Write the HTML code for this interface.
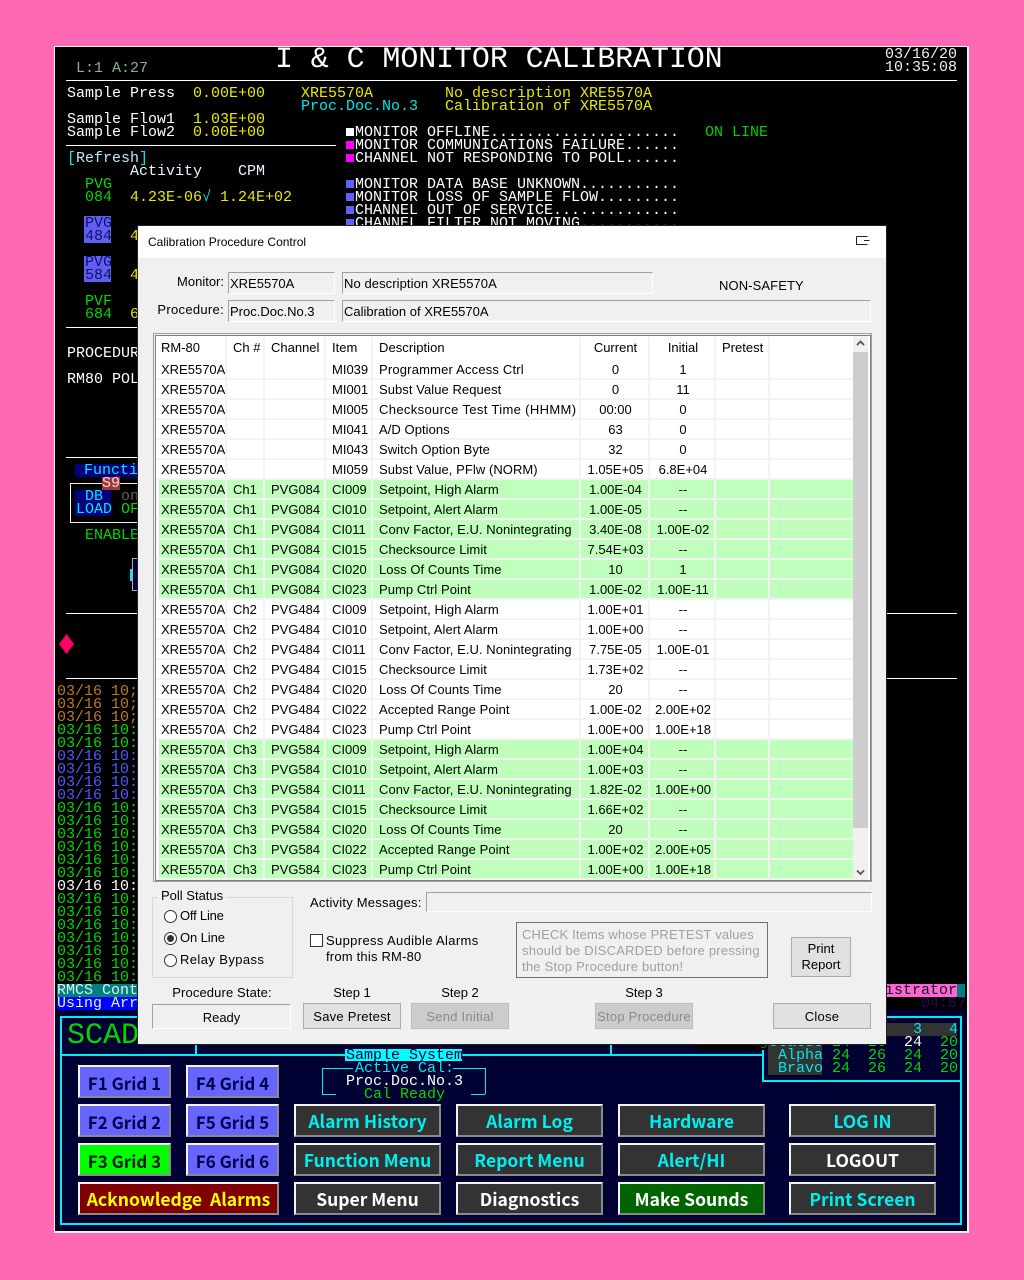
<!DOCTYPE html>
<html><head><meta charset="utf-8"><title>I &amp; C Monitor Calibration</title>
<style>
html,body{margin:0;padding:0;width:1024px;height:1280px;overflow:hidden;background:#ff69b4}
div,span.a{position:absolute}
#win{left:54px;top:46px;width:912px;height:1184px;background:#000;border:1px solid #f0f0f0;border-width:1px 2px 2px 1px;overflow:hidden}
#root{left:0;top:0;width:1024px;height:1280px}
.t{position:absolute;margin-top:1px;font:15px/13px "Liberation Mono",monospace;white-space:pre;color:#fff;height:13px}
.y{color:#e8e800}.g{color:#00d800}.c{color:#00e8e8}.w{color:#e8f0f0}
.l{position:absolute;background:#fff}
.k{position:absolute;background:#00eeee}
.sq{position:absolute;width:8px;height:8px;left:346px}
.b{position:absolute;box-sizing:border-box;height:33px;border:2px solid;border-color:#f4f4f4 #8a8a8a #8a8a8a #f4f4f4;background:#333;font:700 17.500px/32px "Noto Sans CJK SC","Liberation Sans",sans-serif;text-align:center;white-space:pre;color:#00eeee}
.f{background:#6666ff;color:#000050;width:93px;font-size:17px}
.m{width:147px}
#dlg{left:138px;top:226px;width:748px;height:818px;background:#f0f0f0;font:13px/18px "Liberation Sans",sans-serif;color:#000;overflow:hidden;box-shadow:0 0 0 1px #222}
#dlg div{white-space:pre}
.fld{box-sizing:border-box;height:22px;border:1px solid;border-color:#a0a0a0 #fff #fff #a0a0a0;line-height:22px}
.btn{box-sizing:border-box;height:26px;width:98px;top:777px;background:#e1e1e1;border:1px solid #adadad;text-align:center;line-height:26px;letter-spacing:.25px}
.dis{background:#ccc;color:#8a8a8a;border-color:#bfbfbf}
.lb{text-align:center}
table{position:absolute;left:18px;top:111px;border-collapse:separate;border-spacing:0;table-layout:fixed;width:697px;font:13px/16px "Liberation Sans",sans-serif}
td{height:17px;padding:1px 0 0 6px;border-right:2px solid #f3f3f3;border-bottom:2px solid #f3f3f3;white-space:nowrap;overflow:hidden;background:#fff;box-sizing:content-box}
td:first-child{padding-left:5px}
td:nth-child(5){letter-spacing:.06px}
td:nth-child(6),td:nth-child(7){text-align:center;padding-left:2px}
tr.h td{height:21px;padding-top:2px;vertical-align:top;border-bottom:0;background:#fff;line-height:18px}
tr.h td:last-child,td:last-child{border-right:0}
tr.v td{background:#bfffbb}
tr.v td:first-child{background:linear-gradient(90deg,#fff 3px,#bfffbb 3px)}
.rad{box-sizing:border-box;width:13px;height:13px;border:1px solid #333;border-radius:50%;background:#fff;left:26px}
</style></head><body>
<div id="root">
<div id="win"></div>

<!-- header -->
<div class="t" style="left:76px;top:61px;color:#80b888">L:1 A:27</div>
<div class="t" style="left:275px;top:44px;font-size:30px;line-height:30px;height:30px;color:#fff;letter-spacing:-.1px">I &amp; C MONITOR CALIBRATION</div>
<div class="t" style="left:885px;top:47px;color:#f0f0f0">03/16/20</div>
<div class="t" style="left:885px;top:60px;color:#f0f0f0">10:35:08</div>
<div class="l" style="left:66px;top:80px;width:891px;height:1px"></div>

<div class="t" style="left:67px;top:86px">Sample Press  <span class="y">0.00E+00</span></div>
<div class="t y" style="left:301px;top:86px">XRE5570A</div>
<div class="t y" style="left:445px;top:86px">No description XRE5570A</div>
<div class="t c" style="left:301px;top:99px">Proc.Doc.No.3</div>
<div class="t y" style="left:445px;top:99px">Calibration of XRE5570A</div>
<div class="t" style="left:67px;top:112px">Sample Flow1  <span class="y">1.03E+00</span></div>
<div class="t" style="left:67px;top:125px">Sample Flow2  <span class="y">0.00E+00</span></div>
<div class="l" style="left:66px;top:145px;width:270px;height:1px"></div>

<div class="sq" style="top:128px;background:#fff"></div>
<div class="sq" style="top:141px;background:#ff00ff"></div>
<div class="sq" style="top:154px;background:#ff00ff"></div>
<div class="sq" style="top:180px;background:#6060ff"></div>
<div class="sq" style="top:193px;background:#6060ff"></div>
<div class="sq" style="top:206px;background:#6060ff"></div>
<div class="sq" style="top:219px;background:#6060ff"></div>
<div class="t" style="left:355px;top:125px">MONITOR OFFLINE.....................</div>
<div class="t" style="left:355px;top:138px">MONITOR COMMUNICATIONS FAILURE......</div>
<div class="t" style="left:355px;top:151px">CHANNEL NOT RESPONDING TO POLL......</div>
<div class="t" style="left:355px;top:177px">MONITOR DATA BASE UNKNOWN...........</div>
<div class="t" style="left:355px;top:190px">MONITOR LOSS OF SAMPLE FLOW.........</div>
<div class="t" style="left:355px;top:203px">CHANNEL OUT OF SERVICE..............</div>
<div class="t" style="left:355px;top:216px">CHANNEL FILTER NOT MOVING...........</div>
<div class="t g" style="left:705px;top:125px;color:#00d000">ON LINE</div>

<div class="t" style="left:67px;top:151px;color:#b8e8ff"><span class="c">[</span>Refresh<span class="c">]</span></div>
<div class="t" style="left:130px;top:164px;color:#e8f4ff">Activity    CPM</div>
<div class="t g" style="left:85px;top:177px">PVG</div>
<div class="t g" style="left:85px;top:190px">084</div>
<div class="t y" style="left:130px;top:190px">4.23E-06<span class="c">√</span> 1.24E+02</div>

<div style="left:84px;top:216px;width:27px;height:27px;background:#6060f0"></div>
<div class="t" style="left:85px;top:216px;color:#101070">PVG</div>
<div class="t" style="left:85px;top:229px;color:#101070">484</div>
<div class="t y" style="left:130px;top:229px">4</div>
<div style="left:84px;top:256px;width:27px;height:26px;background:#6060f0"></div>
<div class="t" style="left:85px;top:255px;color:#101070">PVG</div>
<div class="t" style="left:85px;top:268px;color:#101070">584</div>
<div class="t y" style="left:130px;top:268px">4</div>
<div class="t g" style="left:85px;top:294px">PVF</div>
<div class="t g" style="left:85px;top:307px">684</div>
<div class="t y" style="left:130px;top:307px">6</div>
<div class="l" style="left:66px;top:327px;width:80px;height:1px"></div>
<div class="t" style="left:67px;top:346px">PROCEDUR</div>
<div class="t" style="left:67px;top:372px">RM80 POL</div>
<div class="l" style="left:66px;top:457px;width:80px;height:1px"></div>

<div style="left:75px;top:464px;width:70px;height:13px;background:#000080"></div>
<div class="t c" style="left:84px;top:463px">Functi</div>
<div style="left:70px;top:483px;width:75px;height:38px;border:1px solid #f0f0f0;border-right:0"></div>
<div style="left:102px;top:477px;width:18px;height:13px;background:#a03838"></div>
<div class="t" style="left:102px;top:476px;color:#f0d8d8">S9</div>
<div style="left:75px;top:490px;width:36px;height:26px;background:#000080"></div>
<div class="t c" style="left:85px;top:489px">DB</div>
<div class="t c" style="left:76px;top:502px">LOAD</div>
<div class="t" style="left:121px;top:489px;color:#606060">on</div>
<div class="t g" style="left:121px;top:502px">OF</div>
<div class="t g" style="left:85px;top:528px">ENABLE</div>
<div style="left:130px;top:569px;width:2px;height:12px;background:#00f0f0"></div>
<div style="left:132px;top:558px;width:10px;height:31px;background:#000040;border:1px solid #aaa;color:#fff"></div>
<div class="l" style="left:66px;top:613px;width:891px;height:1px"></div>
<svg style="position:absolute;left:59px;top:634px" width="16" height="20"><path d="M7.5 0 15 10 7.500 20 0 10Z" fill="#ff0066"/></svg>
<div class="l" style="left:66px;top:678px;width:891px;height:1px"></div>

<!-- log -->
<div class="t" style="left:57px;top:684px;color:#c07820">03/16 10;</div>
<div class="t" style="left:57px;top:697px;color:#c07820">03/16 10;</div>
<div class="t" style="left:57px;top:710px;color:#c07820">03/16 10;</div>
<div class="t g" style="left:57px;top:723px">03/16 10:</div>
<div class="t g" style="left:57px;top:736px">03/16 10:</div>
<div class="t" style="left:57px;top:749px;color:#5058ff">03/16 10:</div>
<div class="t" style="left:57px;top:762px;color:#5058ff">03/16 10:</div>
<div class="t" style="left:57px;top:775px;color:#5058ff">03/16 10:</div>
<div class="t" style="left:57px;top:788px;color:#5058ff">03/16 10:</div>
<div class="t g" style="left:57px;top:801px">03/16 10:</div>
<div class="t g" style="left:57px;top:814px">03/16 10:</div>
<div class="t g" style="left:57px;top:827px">03/16 10:</div>
<div class="t g" style="left:57px;top:840px">03/16 10:</div>
<div class="t g" style="left:57px;top:853px">03/16 10:</div>
<div class="t g" style="left:57px;top:866px">03/16 10:</div>
<div class="t" style="left:57px;top:879px">03/16 10:</div>
<div class="t g" style="left:57px;top:892px">03/16 10:</div>
<div class="t g" style="left:57px;top:905px">03/16 10:</div>
<div class="t g" style="left:57px;top:918px">03/16 10:</div>
<div class="t g" style="left:57px;top:931px">03/16 10:</div>
<div class="t g" style="left:57px;top:944px">03/16 10:</div>
<div class="t g" style="left:57px;top:957px">03/16 10:</div>
<div class="t g" style="left:57px;top:970px">03/16 10:</div>
<div style="left:57px;top:984px;width:90px;height:13px;background:#008080"></div>
<div class="t" style="left:57px;top:983px;color:#e0f0f0">RMCS Cont</div>
<div style="left:57px;top:997px;width:90px;height:13px;background:#0000ff"></div>
<div class="t" style="left:57px;top:996px;color:#e0f0f0">Using Arr</div>
<div style="left:880px;top:984px;width:77px;height:13px;background:#ff66cc"></div>
<div style="left:957px;top:984px;width:8px;height:13px;background:#008080"></div>
<div class="t" style="left:885px;top:983px;color:#101040">istrator</div>
<div class="t" style="left:921px;top:996px;color:#2a0a66">04:57</div>

<!-- lower panel -->
<div style="left:56px;top:1010px;width:910px;height:220px;background:#000033"></div>
<div style="left:60px;top:1016px;width:898px;height:205px;border:2px solid #00eeee"></div>
<div class="k" style="left:62px;top:1054px;width:700px;height:2px"></div>
<div class="k" style="left:195px;top:1040px;width:2px;height:14px"></div>
<div class="k" style="left:610px;top:1040px;width:2px;height:14px"></div>
<div class="k" style="left:762px;top:1030px;width:2px;height:52px"></div>
<div class="k" style="left:762px;top:1080px;width:198px;height:2px"></div>
<div class="t g" style="left:67px;top:1020px;font-size:30px;line-height:30px;height:30px">SCADA</div>
<div class="t c" style="left:615px;top:1034px">SCRSN 1: <span style="background:#000;color:#555">Tracking</span></div>

<div style="left:768px;top:1036px;width:54px;height:39px;background:#333"></div>
<div style="left:768px;top:1023px;width:189px;height:13px;background:#333"></div>
<div class="t c" style="left:778px;top:1048px">Alpha</div>
<div class="t c" style="left:778px;top:1061px">Bravo</div>
<div class="t c" style="left:769px;top:1035px">Status</div>
<div class="t c" style="left:913px;top:1022px">3</div>
<div class="t c" style="left:949px;top:1022px">4</div>
<div class="t g" style="left:832px;top:1035px">24</div>
<div class="t g" style="left:868px;top:1035px">26</div>
<div class="t" style="left:904px;top:1035px;color:#fff">24</div>
<div class="t g" style="left:940px;top:1035px">20</div>
<div class="t g" style="left:832px;top:1048px">24</div>
<div class="t g" style="left:868px;top:1048px">26</div>
<div class="t g" style="left:904px;top:1048px">24</div>
<div class="t g" style="left:940px;top:1048px">20</div>
<div class="t g" style="left:832px;top:1061px">24</div>
<div class="t g" style="left:868px;top:1061px">26</div>
<div class="t g" style="left:904px;top:1061px">24</div>
<div class="t g" style="left:940px;top:1061px">20</div>

<div style="left:345px;top:1049px;width:117px;height:12px;background:#00ffff"></div>
<div class="t" style="left:346px;top:1048px;color:#000040">Sample System</div>
<div class="k" style="left:322px;top:1068px;width:31px;height:1px"></div>
<div class="k" style="left:453px;top:1068px;width:32px;height:1px"></div>
<div class="k" style="left:322px;top:1068px;width:1px;height:26px"></div>
<div class="k" style="left:485px;top:1068px;width:1px;height:26px"></div>
<div class="k" style="left:322px;top:1094px;width:14px;height:1px"></div>
<div class="k" style="left:471px;top:1094px;width:14px;height:1px"></div>
<div class="t c" style="left:355px;top:1061px">Active Cal:</div>
<div class="t" style="left:346px;top:1074px">Proc.Doc.No.3</div>
<div class="t g" style="left:364px;top:1087px">Cal Ready</div>

<div class="b f" style="left:78px;top:1065px">F1 Grid 1</div>
<div class="b f" style="left:186px;top:1065px">F4 Grid 4</div>
<div class="b f" style="left:78px;top:1104px">F2 Grid 2</div>
<div class="b f" style="left:186px;top:1104px">F5 Grid 5</div>
<div class="b f" style="left:78px;top:1143px;background:#00ff00;color:#002000">F3 Grid 3</div>
<div class="b f" style="left:186px;top:1143px">F6 Grid 6</div>
<div class="b" style="left:78px;top:1182px;width:201px;background:#800000;color:#ffff00">Acknowledge  Alarms</div>
<div class="b m" style="left:294px;top:1104px">Alarm History</div>
<div class="b m" style="left:294px;top:1143px">Function Menu</div>
<div class="b m" style="left:294px;top:1182px;color:#fff">Super Menu</div>
<div class="b m" style="left:456px;top:1104px">Alarm Log</div>
<div class="b m" style="left:456px;top:1143px">Report Menu</div>
<div class="b m" style="left:456px;top:1182px;color:#fff">Diagnostics</div>
<div class="b m" style="left:618px;top:1104px">Hardware</div>
<div class="b m" style="left:618px;top:1143px">Alert/HI</div>
<div class="b m" style="left:618px;top:1182px;background:#006400;color:#fff">Make Sounds</div>
<div class="b m" style="left:789px;top:1104px">LOG IN</div>
<div class="b m" style="left:789px;top:1143px;color:#fff">LOGOUT</div>
<div class="b m" style="left:789px;top:1182px">Print Screen</div>

<!-- dialog -->
<div id="dlg">
<div style="left:0;top:0;width:748px;height:32px;background:#fff"></div>
<div style="left:10px;top:8px;font-size:12px;line-height:16px">Calibration Procedure Control</div>
<svg style="position:absolute;left:718px;top:10px" width="14" height="10"><path d="M.5 .5H11.500M.5 .5V8.500H11.500M8 4.500H13.500" fill="none" stroke="#222"/></svg>

<div style="left:0;top:47px;width:86px;text-align:right">Monitor:</div>
<div class="fld" style="left:90px;top:46px;width:107px;padding-left:1px">XRE5570A</div>
<div class="fld" style="left:204px;top:46px;width:311px;padding-left:1px;letter-spacing:.08px">No description XRE5570A</div>
<div style="left:581px;top:51px;letter-spacing:.1px">NON-SAFETY</div>
<div style="left:0;top:75px;width:86px;text-align:right;letter-spacing:.3px">Procedure:</div>
<div class="fld" style="left:90px;top:74px;width:107px;padding-left:1px">Proc.Doc.No.3</div>
<div class="fld" style="left:204px;top:74px;width:529px;padding-left:1px">Calibration of XRE5570A</div>

<div style="left:15px;top:107px;width:717px;height:547px;border:1px solid #a0a0a0"></div>
<div style="left:17px;top:109px;width:716px;height:546px;border:1px solid #808080;box-sizing:border-box;background:#fff"></div>

<table><colgroup><col style="width:71px"><col style="width:38px"><col style="width:61px"><col style="width:47px"><col style="width:208px"><col style="width:69px"><col style="width:66px"><col style="width:54px"><col></colgroup>
<tr class="h"><td>RM-80<td>Ch #<td>Channel<td>Item<td>Description<td>Current<td>Initial<td>Pretest<td></tr>
<tr><td>XRE5570A<td><td><td>MI039<td style="letter-spacing:.18px">Programmer Access Ctrl<td>0<td>1<td><td></tr>
<tr><td>XRE5570A<td><td><td>MI001<td>Subst Value Request<td>0<td>11<td><td></tr>
<tr><td>XRE5570A<td><td><td>MI005<td style="letter-spacing:.35px">Checksource Test Time (HHMM)<td>00:00<td>0<td><td></tr>
<tr><td>XRE5570A<td><td><td>MI041<td>A/D Options<td>63<td>0<td><td></tr>
<tr><td>XRE5570A<td><td><td>MI043<td>Switch Option Byte<td>32<td>0<td><td></tr>
<tr><td>XRE5570A<td><td><td>MI059<td>Subst Value, PFlw (NORM)<td>1.05E+05<td>6.8E+04<td><td></tr>
<tr class="v"><td>XRE5570A<td>Ch1<td>PVG084<td>CI009<td>Setpoint, High Alarm<td>1.00E-04<td>--<td><td></tr>
<tr class="v"><td>XRE5570A<td>Ch1<td>PVG084<td>CI010<td>Setpoint, Alert Alarm<td>1.00E-05<td>--<td><td></tr>
<tr class="v"><td>XRE5570A<td>Ch1<td>PVG084<td>CI011<td>Conv Factor, E.U. Nonintegrating<td>3.40E-08<td>1.00E-02<td><td></tr>
<tr class="v"><td>XRE5570A<td>Ch1<td>PVG084<td>CI015<td>Checksource Limit<td>7.54E+03<td>--<td><td></tr>
<tr class="v"><td>XRE5570A<td>Ch1<td>PVG084<td>CI020<td>Loss Of Counts Time<td>10<td>1<td><td></tr>
<tr class="v"><td>XRE5570A<td>Ch1<td>PVG084<td>CI023<td>Pump Ctrl Point<td>1.00E-02<td>1.00E-11<td><td></tr>
<tr><td>XRE5570A<td>Ch2<td>PVG484<td>CI009<td>Setpoint, High Alarm<td>1.00E+01<td>--<td><td></tr>
<tr><td>XRE5570A<td>Ch2<td>PVG484<td>CI010<td>Setpoint, Alert Alarm<td>1.00E+00<td>--<td><td></tr>
<tr><td>XRE5570A<td>Ch2<td>PVG484<td>CI011<td>Conv Factor, E.U. Nonintegrating<td>7.75E-05<td>1.00E-01<td><td></tr>
<tr><td>XRE5570A<td>Ch2<td>PVG484<td>CI015<td>Checksource Limit<td>1.73E+02<td>--<td><td></tr>
<tr><td>XRE5570A<td>Ch2<td>PVG484<td>CI020<td>Loss Of Counts Time<td>20<td>--<td><td></tr>
<tr><td>XRE5570A<td>Ch2<td>PVG484<td>CI022<td>Accepted Range Point<td>1.00E-02<td>2.00E+02<td><td></tr>
<tr><td>XRE5570A<td>Ch2<td>PVG484<td>CI023<td>Pump Ctrl Point<td>1.00E+00<td>1.00E+18<td><td></tr>
<tr class="v"><td>XRE5570A<td>Ch3<td>PVG584<td>CI009<td>Setpoint, High Alarm<td>1.00E+04<td>--<td><td></tr>
<tr class="v"><td>XRE5570A<td>Ch3<td>PVG584<td>CI010<td>Setpoint, Alert Alarm<td>1.00E+03<td>--<td><td></tr>
<tr class="v"><td>XRE5570A<td>Ch3<td>PVG584<td>CI011<td>Conv Factor, E.U. Nonintegrating<td>1.82E-02<td>1.00E+00<td><td></tr>
<tr class="v"><td>XRE5570A<td>Ch3<td>PVG584<td>CI015<td>Checksource Limit<td>1.66E+02<td>--<td><td></tr>
<tr class="v"><td>XRE5570A<td>Ch3<td>PVG584<td>CI020<td>Loss Of Counts Time<td>20<td>--<td><td></tr>
<tr class="v"><td>XRE5570A<td>Ch3<td>PVG584<td>CI022<td>Accepted Range Point<td>1.00E+02<td>2.00E+05<td><td></tr>
<tr class="v"><td>XRE5570A<td>Ch3<td>PVG584<td>CI023<td>Pump Ctrl Point<td>1.00E+00<td>1.00E+18<td><td></tr>
</table>

<!-- scrollbar -->
<div style="left:715px;top:110px;width:15px;height:544px;background:#f0f0f0"></div>
<div style="left:715px;top:126px;width:15px;height:476px;background:#cdcdcd"></div>
<svg style="position:absolute;left:718px;top:114px" width="9" height="7"><path d="M1 5 4.500 1.500 8 5" fill="none" stroke="#505050" stroke-width="1.700"/></svg>
<svg style="position:absolute;left:718px;top:643px" width="9" height="7"><path d="M1 1.500 4.500 5 8 1.500" fill="none" stroke="#505050" stroke-width="1.700"/></svg>

<!-- poll status -->
<div style="left:14px;top:671px;width:139px;height:79px;border:1px solid #d8d8d8"></div>
<div style="left:20px;top:661px;background:#f0f0f0;padding:0 3px">Poll Status</div>
<div class="rad" style="top:684px"></div>
<div style="left:42px;top:681px;letter-spacing:-.2px">Off Line</div>
<div class="rad" style="top:706px"></div>
<div style="left:29px;top:709px;width:7px;height:7px;border-radius:50%;background:#333"></div>
<div style="left:42px;top:703px;letter-spacing:-.1px">On Line</div>
<div class="rad" style="top:728px"></div>
<div style="left:42px;top:725px;letter-spacing:.4px">Relay Bypass</div>

<div style="left:172px;top:668px;letter-spacing:.22px">Activity Messages:</div>
<div class="fld" style="left:288px;top:666px;width:446px;height:20px"></div>

<div style="left:172px;top:708px;width:13px;height:13px;box-sizing:border-box;border:1px solid #333;background:#fff"></div>
<div style="left:188px;top:706px;letter-spacing:.35px">Suppress Audible Alarms</div>
<div style="left:188px;top:722px;letter-spacing:.2px">from this RM-80</div>

<div style="left:378px;top:696px;width:250px;height:54px;border:1px solid #707070"></div>
<div style="left:384px;top:700px;color:#a0a0a0;letter-spacing:.16px">CHECK Items whose PRETEST values</div>
<div style="left:384px;top:716px;color:#a0a0a0;letter-spacing:.23px">should be DISCARDED before pressing</div>
<div style="left:384px;top:732px;color:#a0a0a0;letter-spacing:.23px">the Stop Procedure button!</div>

<div style="left:653px;top:711px;width:58px;height:38px;background:#e1e1e1;border:1px solid #adadad;text-align:center;line-height:16px"><span style="display:block;margin-top:3px">Print<br>Report</span></div>

<div class="lb" style="left:14px;top:758px;width:140px;letter-spacing:.12px">Procedure State:</div>
<div class="fld lb" style="left:14px;top:778px;width:139px;height:25px;line-height:25px">Ready</div>
<div class="lb" style="left:165px;top:758px;width:98px">Step 1</div>
<div class="btn" style="left:165px">Save Pretest</div>
<div class="lb" style="left:273px;top:758px;width:98px">Step 2</div>
<div class="btn dis" style="left:273px">Send Initial</div>
<div class="lb" style="left:457px;top:758px;width:98px">Step 3</div>
<div class="btn dis" style="left:457px">Stop Procedure</div>
<div class="btn" style="left:635px">Close</div>
</div>
</div>
</body></html>
